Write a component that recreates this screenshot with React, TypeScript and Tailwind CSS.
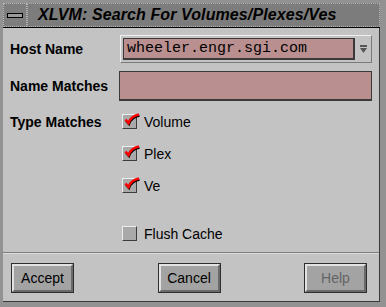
import React from 'react';

const Check = ({ checked }: { checked: boolean }) => (
  <div className="relative w-[15px] h-[15px] bg-[#a9a9a9] border border-t-[#eeeeee] border-l-[#eeeeee] border-r-[#3c3c3c] border-b-[#3c3c3c] shrink-0">
    {checked && (
      <svg className="absolute left-[0px] top-[-3px]" width="17" height="15" viewBox="0 0 17 15">
        <path d="M2.5 7.5 L5.5 11 Q8 4 16 2.5" fill="none" stroke="#000" strokeWidth="2" transform="translate(0.5,1.3)" />
        <path d="M2.5 7.5 L5.5 11 Q8 4 16 2.5" fill="none" stroke="#ff0000" strokeWidth="2.6" />
      </svg>
    )}
  </div>
);

const CheckRow = ({ label, checked }: { label: string; checked: boolean }) => (
  <div className="flex items-center gap-[7px] h-[15px]">
    <Check checked={checked} />
    <span className="text-[14px] text-black leading-none">{label}</span>
  </div>
);

const Button = ({ label, disabled }: { label: string; disabled?: boolean }) => (
  <div className="w-[63px] h-[30px] border border-[#2e2e2e] bg-[#a3a3a3]">
    <div className="w-full h-full flex items-center justify-center border-2 border-t-[#e2e2e2] border-l-[#e2e2e2] border-r-[#6a6a6a] border-b-[#6a6a6a]">
      <span className={`text-[14px] leading-none ${disabled ? 'text-[#4a4a4a] opacity-70' : 'text-black'}`}>{label}</span>
    </div>
  </div>
);

export default function App() {
  return (
    <div
      className="w-[386px] h-[307px] bg-[#929292] flex flex-col pl-[3px] pr-[6px] pt-[3px] pb-[5px]"
      style={{ fontFamily: '"Liberation Sans", Arial, sans-serif' }}
    >
      <div className="h-[25px] flex border-b border-black shrink-0">
        <div className="w-[24px] h-full bg-[#7e7e7e] border border-dotted border-[#b8b8b8] flex items-center justify-center">
          <div className="w-[16px] h-[5px] border-[1.5px] border-black bg-[#9a9a9a]" />
        </div>
        <div className="flex-1 h-full bg-[#7c7c7c] border border-dotted border-[#b0b0b0] flex items-center pl-[10px]">
          <span className="text-[16px] font-bold italic text-black leading-none tracking-[0.1px]">
            XLVM: Search For Volumes/Plexes/Ves
          </span>
        </div>
      </div>
      <div className="flex-1 bg-[#c3c3c3] border-r border-b border-[#3a3a3a] flex flex-col">
        <div className="flex items-center mt-[7px] ml-[7px]">
          <span className="w-[110px] text-[14px] font-bold text-black">Host Name</span>
          <div className="w-[252px] h-[28px] flex items-center border border-t-[#efefef] border-l-[#efefef] border-r-[#7a7a7a] border-b-[#7a7a7a] pl-[2px]">
            <div className="w-[232px] h-[22px] bg-[#ba8f8f] border border-[#3a3a3a] border-b-2 border-r-2 flex items-center pl-[3px]">
              <span className="text-[15px] text-black leading-none" style={{ fontFamily: '"Liberation Mono", "Courier New", monospace' }}>
                wheeler.engr.sgi.com
              </span>
            </div>
            <div className="flex-1 flex items-center justify-center">
              <svg width="9" height="9" viewBox="0 0 9 9">
                <rect x="1" y="0" width="7" height="2" fill="#555" />
                <path d="M1 3 L8 3 L4.5 8 Z" fill="#555" />
              </svg>
            </div>
          </div>
        </div>
        <div className="flex items-center mt-[8px] ml-[7px]">
          <span className="w-[109px] text-[14px] font-bold text-black">Name Matches</span>
          <div className="w-[253px] h-[30px] bg-[#ba8f8f] border border-[#3a3a3a] border-b-2" />
        </div>
        <div className="flex mt-[13px] ml-[7px]">
          <span className="w-[112px] text-[14px] font-bold text-black leading-[15px] mt-[1px]">Type Matches</span>
          <div className="flex flex-col">
            <div className="flex flex-col gap-[17px]">
              <CheckRow label="Volume" checked />
              <CheckRow label="Plex" checked />
              <CheckRow label="Ve" checked />
            </div>
            <div className="mt-[33px]">
              <CheckRow label="Flush Cache" checked={false} />
            </div>
          </div>
        </div>
        <div className="mt-[11px] h-[1px] bg-[#7e7e7e] border-b border-[#dcdcdc] box-content" />
        <div className="flex justify-between mt-[9px] ml-[8px] mr-[12px]">
          <Button label="Accept" />
          <Button label="Cancel" />
          <Button label="Help" disabled />
        </div>
      </div>
    </div>
  );
}
